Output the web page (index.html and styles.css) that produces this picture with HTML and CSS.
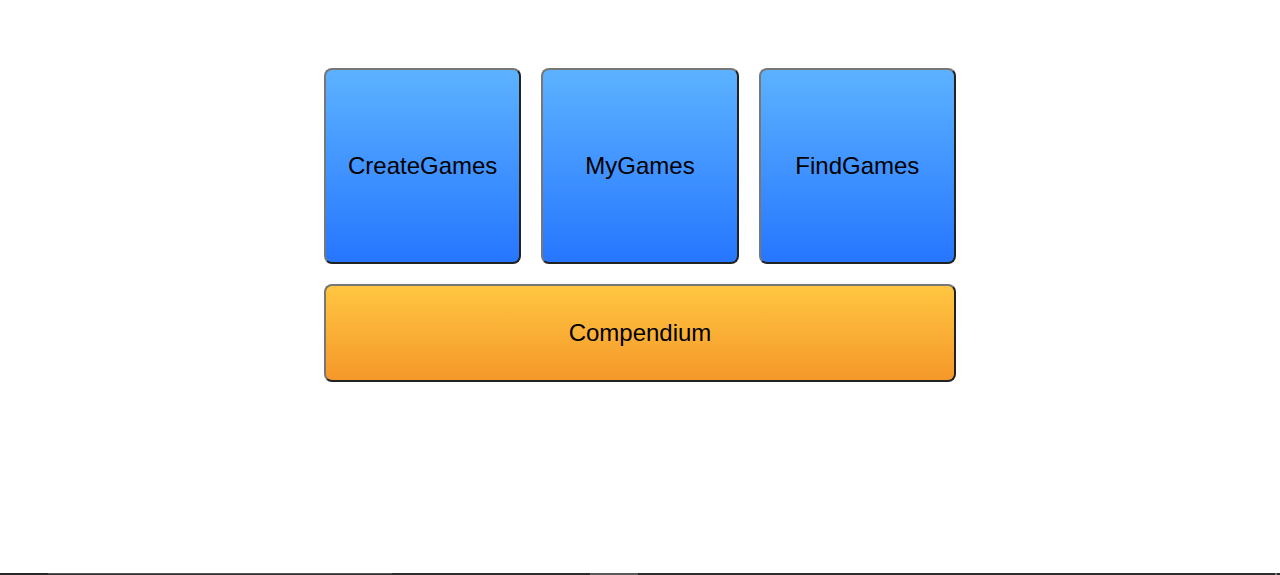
FILE: index.html
```
<!DOCTYPE html>
<html>
<head>
<meta charset="utf-8">
<link rel="stylesheet" href="styles.css">
</head>
<body>
<main class="menu">
  <div class="grid">
    <button class="tile blue">CreateGames</button>
    <button class="tile blue">MyGames</button>
    <button class="tile blue">FindGames</button>
    <button class="tile orange wide">Compendium</button>
  </div>
</main>
<div class="bottombar">
  <span class="seg seg-a"></span>
  <span class="seg seg-b"></span>
  <span class="seg seg-c"></span>
  <span class="seg seg-d"></span>
  <span class="seg seg-e"></span>
  <span class="seg seg-f"></span>
</div>
</body>
</html>
```
FILE: styles.css
```
html, body {
  margin: 0;
  padding: 0;
  background: #fff;
  height: 100%;
  overflow: hidden;
}
body {
  font-family: "Liberation Sans", Arial, sans-serif;
  position: relative;
}
.menu {
  display: flex;
  justify-content: center;
  padding-top: 68px;
}
.grid {
  width: 632px;
  display: grid;
  grid-template-columns: repeat(3, 1fr);
  grid-template-rows: 196px 98px;
  gap: 20px;
}
.tile {
  box-sizing: border-box;
  border: 2px solid;
  border-color: #777 #222 #222 #777;
  border-radius: 8px;
  font-family: "Liberation Sans", Arial, sans-serif;
  font-size: 24px;
  color: #000;
  padding: 0;
  margin: 0;
  display: flex;
  align-items: center;
  justify-content: center;
  cursor: pointer;
}
.blue {
  background: linear-gradient(to bottom, #5cb2ff, #2676ff);
}
.orange {
  background: linear-gradient(to bottom, #ffc641, #f5982a);
}
.wide {
  grid-column: 1 / 4;
}
.bottombar {
  position: fixed;
  left: 0;
  right: 0;
  bottom: 0;
  height: 2px;
  background: #2c2c2c;
  display: flex;
}
.seg { display: block; height: 2px; }
.seg-a { width: 48px; background: #282828; }
.seg-b { width: 344px; background: linear-gradient(to bottom, #555 50%, #333 50%); }
.seg-c { width: 198px; background: #2c2c2c; }
.seg-d { width: 48px; background: #5a5a5a; }
.seg-e { flex: 1; background: #2c2c2c; }
.seg-f { width: 2px; background: #777; margin-right: 3px; }
```
